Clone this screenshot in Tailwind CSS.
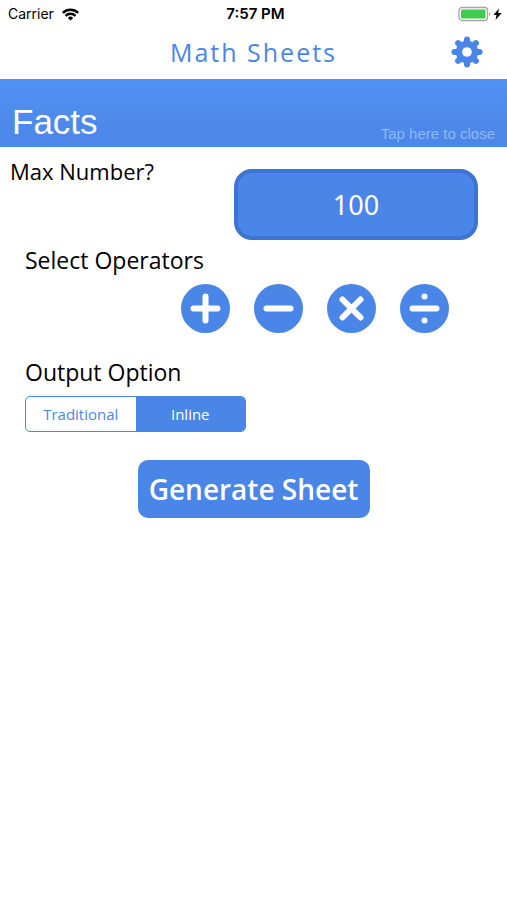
<!DOCTYPE html>
<html lang="en">
<head>
<meta charset="utf-8">
<meta name="viewport" content="width=device-width, initial-scale=1">
<title>Math Sheets</title>
<script src="https://cdn.jsdelivr.net/npm/@tailwindcss/browser@4"></script>
</head>
<body class="min-h-screen bg-white font-['Open_Sans','Noto_Sans',sans-serif] text-black">
<div class="grid h-7 grid-cols-3 items-center px-2 font-['Inter',sans-serif] text-[14px] leading-5">
  <div class="flex items-center gap-2">
    <span>Carrier</span>
    <svg class="h-[13px] w-[17px]" viewBox="0 0 16 12" fill="none" stroke="#000" stroke-width="2.3" aria-hidden="true">
      <path d="M.8 4.4a10.300 10.300 0 0 1 14.400 0M3.300 7.200a6.700 6.700 0 0 1 9.400 0"/>
      <path d="M8 11.700 5.500 9.200a3.600 3.600 0 0 1 5 0z" fill="#000" stroke="none"/>
    </svg>
  </div>
  <div class="pl-1 text-center text-[15px] font-semibold">7:57 PM</div>
  <div class="flex items-center justify-end pb-px">
    <svg class="-mr-1 h-4 w-[45px]" viewBox="0 0 45 16" aria-hidden="true">
      <rect x="1" y="1.500" width="28.500" height="13" rx="3" fill="#fff" stroke="#a5a5a5" stroke-width="1.300"/>
      <rect x="3" y="3.500" width="24.500" height="9" rx="1" fill="#3fcb4e"/>
      <path d="M31 6c1.600.4 1.600 3.600 0 4z" fill="#a5a5a5"/>
      <path d="m41 2.500-5.500 6.600h3L37.500 14l6.200-7h-3.500z" fill="#000"/>
    </svg>
  </div>
</div>
<header class="grid h-[51px] grid-cols-[1fr_auto_1fr] items-center px-6 pb-1">
  <h1 class="col-start-2 text-[25px] leading-8 tracking-[2px] text-[#4a86e8]">Math Sheets</h1>
  <button type="button" aria-label="Settings" class="justify-self-end">
    <svg class="size-8" viewBox="-16 -16 32 32" aria-hidden="true">
      <g stroke="#4a86e8" stroke-width="6" stroke-linecap="round">
        <path d="M0-12.600V12.600M-12.600 0H12.600M-8.900-8.900 8.900 8.900M8.900-8.900-8.900 8.900"/>
      </g>
      <circle r="11.200" fill="#4a86e8"/>
      <circle r="4.800" fill="#fff"/>
    </svg>
  </button>
</header>
<main>
  <button type="button" class="flex h-[68px] w-full items-end justify-between bg-linear-to-b from-[#5190f3] to-[#4b86e8] px-3 pb-1 text-left font-['Liberation_Sans',sans-serif]">
    <span class="pb-px text-[35px] leading-10 text-white">Facts</span>
    <span class="text-[15px] leading-[18px] text-[#8fb8f8]">Tap here to close</span>
  </button>
  <form class="flex flex-col" onsubmit="return false">
    <div class="flex items-start justify-between pt-2 pr-[29px] pl-[10px]">
      <label for="max" class="text-[22px] leading-8">Max Number?</label>
      <input id="max" type="text" value="100" inputmode="numeric" class="mt-[14px] h-[71px] w-[244px] rounded-[18px] border-4 border-[#3d74d2] bg-[#4a86e8] text-center font-['Noto_Sans',sans-serif] text-[27px] leading-9 text-white">
    </div>
    <fieldset class="px-[25px] pt-1">
      <legend class="float-left w-full text-[23px] leading-8">Select Operators</legend>
      <div class="clear-both flex justify-end gap-6 pt-2 pr-[33px]">
        <button type="button" aria-label="Add" class="size-[49px] rounded-full bg-[#4a86e8]">
          <svg viewBox="0 0 49 49" fill="none" stroke="#fff" stroke-width="6" stroke-linecap="round" aria-hidden="true"><path d="M12.500 24.500h24M24.500 12.500v24"/></svg>
        </button>
        <button type="button" aria-label="Subtract" class="size-[49px] rounded-full bg-[#4a86e8]">
          <svg viewBox="0 0 49 49" fill="none" stroke="#fff" stroke-width="6" stroke-linecap="round" aria-hidden="true"><path d="M12.500 24.500h24"/></svg>
        </button>
        <button type="button" aria-label="Multiply" class="size-[49px] rounded-full bg-[#4a86e8]">
          <svg viewBox="0 0 49 49" fill="none" stroke="#fff" stroke-width="6" stroke-linecap="round" aria-hidden="true"><path d="m15.500 15.500 18 18M33.500 15.500l-18 18"/></svg>
        </button>
        <button type="button" aria-label="Divide" class="size-[49px] rounded-full bg-[#4a86e8]">
          <svg viewBox="0 0 49 49" fill="none" stroke="#fff" stroke-width="6" stroke-linecap="round" aria-hidden="true"><path d="M12.500 24.500h24M24.500 12.500v.01M24.500 36.500v.01"/></svg>
        </button>
      </div>
    </fieldset>
    <fieldset class="px-[25px] pt-[23px]">
      <legend class="float-left w-full text-[23px] leading-8">Output Option</legend>
      <div class="clear-both pt-2">
        <div class="grid h-9 w-[221px] grid-cols-2 overflow-hidden rounded-[5px] border border-[#4a86e8] text-[15px] leading-5">
          <label class="flex items-center justify-center text-[#4a86e8] has-checked:bg-[#4a86e8] has-checked:text-white"><input type="radio" name="output" class="sr-only">Traditional</label>
          <label class="flex items-center justify-center text-[#4a86e8] has-checked:bg-[#4a86e8] has-checked:text-white"><input type="radio" name="output" class="sr-only" checked>Inline</label>
        </div>
      </div>
    </fieldset>
    <button type="submit" class="mt-7 h-[58px] w-[232px] self-center rounded-[10px] bg-[#4a86e8] text-[28px] leading-9 font-semibold text-white">Generate Sheet</button>
  </form>
</main>
</body>
</html>
